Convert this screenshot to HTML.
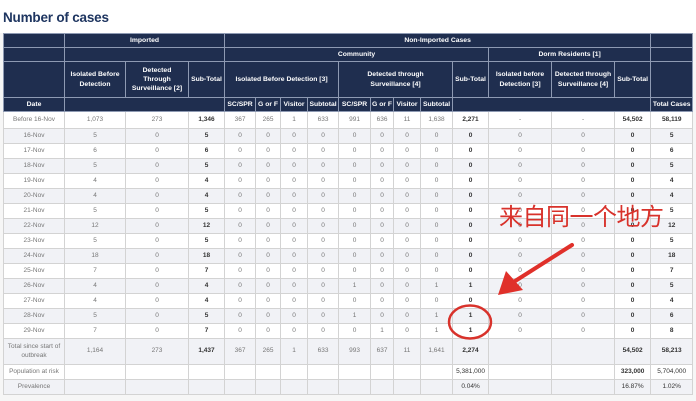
<!DOCTYPE html>
<html><head><meta charset="utf-8"><style>
*{margin:0;padding:0;box-sizing:border-box}
body{width:696px;height:401px;background:#f6f6f6;font-family:"Liberation Sans",Arial,sans-serif;position:relative;overflow:hidden}
.bgtop{position:absolute;left:0;top:0;width:696px;height:33px;background:#fff}
h1{position:absolute;left:3px;top:10px;font-size:13.5px;font-weight:bold;color:#1e3560;letter-spacing:-0.2px}
table{position:absolute;left:3px;top:33px;border-collapse:collapse;table-layout:fixed;width:689px}
td,th{font-size:6.5px;text-align:center;vertical-align:middle;overflow:hidden;line-height:1.35}
th{background:#1f2e4f;color:#fff;font-weight:bold;border:1px solid #8e9ab3;font-size:6.8px;padding:0 3px}
td{border:1px solid #d3d3d3;color:#777;background:#fff}
tr.g td{background:#f1f2f6}
td.b{font-weight:bold;color:#333}
.ann{position:absolute;left:499px;top:203px;font-family:"Noto Sans CJK SC","WenQuanYi Zen Hei",sans-serif;font-size:24px;color:#d8322b;letter-spacing:-0.5px;line-height:1}
svg{position:absolute;left:0;top:0}
</style></head><body>
<div class="bgtop"></div>
<h1>Number of cases</h1>
<table>
<colgroup><col style="width:61px"><col style="width:61px"><col style="width:63px"><col style="width:36px"><col style="width:31px"><col style="width:25px"><col style="width:27px"><col style="width:31px"><col style="width:32px"><col style="width:23px"><col style="width:27px"><col style="width:32px"><col style="width:36px"><col style="width:63px"><col style="width:63px"><col style="width:36px"><col style="width:42px"></colgroup>
<tr style="height:14px"><th></th><th colspan="3">Imported</th><th colspan="12">Non-Imported Cases</th><th></th></tr>
<tr style="height:14px"><th></th><th colspan="3"></th><th colspan="9">Community</th><th colspan="3">Dorm Residents [1]</th><th></th></tr>
<tr style="height:36px"><th></th><th>Isolated Before Detection</th><th style="padding:0 4px">Detected Through Surveillance [2]</th><th style="padding:0">Sub-Total</th><th colspan="4">Isolated Before Detection [3]</th><th colspan="4" style="padding:0 8px">Detected through Surveillance [4]</th><th style="padding:0">Sub-Total</th><th style="padding:0">Isolated before Detection [3]</th><th style="padding:0">Detected through Surveillance [4]</th><th style="padding:0">Sub-Total</th><th></th></tr>
<tr style="height:14px"><th>Date</th><th colspan="3"></th><th style="padding:0">SC/SPR</th><th style="padding:0">G or F</th><th style="padding:0">Visitor</th><th style="padding:0">Subtotal</th><th style="padding:0">SC/SPR</th><th style="padding:0">G or F</th><th style="padding:0">Visitor</th><th style="padding:0">Subtotal</th><th colspan="4"></th><th style="padding:0">Total Cases</th></tr>
<tr style="height:17px"><td>Before 16-Nov</td><td>1,073</td><td>273</td><td class="b">1,346</td><td>367</td><td>265</td><td>1</td><td>633</td><td>991</td><td>636</td><td>11</td><td>1,638</td><td class="b">2,271</td><td>-</td><td>-</td><td class="b">54,502</td><td class="b">58,119</td></tr>
<tr class="g" style="height:15px"><td>16-Nov</td><td>5</td><td>0</td><td class="b">5</td><td>0</td><td>0</td><td>0</td><td>0</td><td>0</td><td>0</td><td>0</td><td>0</td><td class="b">0</td><td>0</td><td>0</td><td class="b">0</td><td class="b">5</td></tr>
<tr style="height:15px"><td>17-Nov</td><td>6</td><td>0</td><td class="b">6</td><td>0</td><td>0</td><td>0</td><td>0</td><td>0</td><td>0</td><td>0</td><td>0</td><td class="b">0</td><td>0</td><td>0</td><td class="b">0</td><td class="b">6</td></tr>
<tr class="g" style="height:15px"><td>18-Nov</td><td>5</td><td>0</td><td class="b">5</td><td>0</td><td>0</td><td>0</td><td>0</td><td>0</td><td>0</td><td>0</td><td>0</td><td class="b">0</td><td>0</td><td>0</td><td class="b">0</td><td class="b">5</td></tr>
<tr style="height:15px"><td>19-Nov</td><td>4</td><td>0</td><td class="b">4</td><td>0</td><td>0</td><td>0</td><td>0</td><td>0</td><td>0</td><td>0</td><td>0</td><td class="b">0</td><td>0</td><td>0</td><td class="b">0</td><td class="b">4</td></tr>
<tr class="g" style="height:15px"><td>20-Nov</td><td>4</td><td>0</td><td class="b">4</td><td>0</td><td>0</td><td>0</td><td>0</td><td>0</td><td>0</td><td>0</td><td>0</td><td class="b">0</td><td>0</td><td>0</td><td class="b">0</td><td class="b">4</td></tr>
<tr style="height:15px"><td>21-Nov</td><td>5</td><td>0</td><td class="b">5</td><td>0</td><td>0</td><td>0</td><td>0</td><td>0</td><td>0</td><td>0</td><td>0</td><td class="b">0</td><td>0</td><td>0</td><td class="b">0</td><td class="b">5</td></tr>
<tr class="g" style="height:15px"><td>22-Nov</td><td>12</td><td>0</td><td class="b">12</td><td>0</td><td>0</td><td>0</td><td>0</td><td>0</td><td>0</td><td>0</td><td>0</td><td class="b">0</td><td>0</td><td>0</td><td class="b">0</td><td class="b">12</td></tr>
<tr style="height:15px"><td>23-Nov</td><td>5</td><td>0</td><td class="b">5</td><td>0</td><td>0</td><td>0</td><td>0</td><td>0</td><td>0</td><td>0</td><td>0</td><td class="b">0</td><td>0</td><td>0</td><td class="b">0</td><td class="b">5</td></tr>
<tr class="g" style="height:15px"><td>24-Nov</td><td>18</td><td>0</td><td class="b">18</td><td>0</td><td>0</td><td>0</td><td>0</td><td>0</td><td>0</td><td>0</td><td>0</td><td class="b">0</td><td>0</td><td>0</td><td class="b">0</td><td class="b">18</td></tr>
<tr style="height:15px"><td>25-Nov</td><td>7</td><td>0</td><td class="b">7</td><td>0</td><td>0</td><td>0</td><td>0</td><td>0</td><td>0</td><td>0</td><td>0</td><td class="b">0</td><td>0</td><td>0</td><td class="b">0</td><td class="b">7</td></tr>
<tr class="g" style="height:15px"><td>26-Nov</td><td>4</td><td>0</td><td class="b">4</td><td>0</td><td>0</td><td>0</td><td>0</td><td>1</td><td>0</td><td>0</td><td>1</td><td class="b">1</td><td>0</td><td>0</td><td class="b">0</td><td class="b">5</td></tr>
<tr style="height:15px"><td>27-Nov</td><td>4</td><td>0</td><td class="b">4</td><td>0</td><td>0</td><td>0</td><td>0</td><td>0</td><td>0</td><td>0</td><td>0</td><td class="b">0</td><td>0</td><td>0</td><td class="b">0</td><td class="b">4</td></tr>
<tr class="g" style="height:15px"><td>28-Nov</td><td>5</td><td>0</td><td class="b">5</td><td>0</td><td>0</td><td>0</td><td>0</td><td>1</td><td>0</td><td>0</td><td>1</td><td class="b">1</td><td>0</td><td>0</td><td class="b">0</td><td class="b">6</td></tr>
<tr style="height:15px"><td>29-Nov</td><td>7</td><td>0</td><td class="b">7</td><td>0</td><td>0</td><td>0</td><td>0</td><td>0</td><td>1</td><td>0</td><td>1</td><td class="b">1</td><td>0</td><td>0</td><td class="b">0</td><td class="b">8</td></tr>
<tr class="g" style="height:26px"><td>Total since start of outbreak</td><td>1,164</td><td>273</td><td class="b">1,437</td><td>367</td><td>265</td><td>1</td><td>633</td><td>993</td><td>637</td><td>11</td><td>1,641</td><td class="b">2,274</td><td></td><td></td><td class="b">54,502</td><td class="b">58,213</td></tr>
<tr style="height:15px"><td>Population at risk</td><td></td><td></td><td></td><td></td><td></td><td></td><td></td><td></td><td></td><td></td><td></td><td style="color:#333">5,381,000</td><td></td><td></td><td class="b">323,000</td><td style="color:#333">5,704,000</td></tr>
<tr class="g" style="height:15px"><td>Prevalence</td><td></td><td></td><td></td><td></td><td></td><td></td><td></td><td></td><td></td><td></td><td></td><td style="color:#333">0.04%</td><td></td><td></td><td style="color:#333">16.87%</td><td style="color:#333">1.02%</td></tr>
</table>
<div class="ann">来自同一个地方</div>
<svg width="696" height="401">
<line x1="572" y1="245" x2="512" y2="283" stroke="#e0302a" stroke-width="4" stroke-linecap="round"/>
<polygon points="498,295 506,271 523,290" fill="#e0302a"/>
<ellipse cx="470" cy="322" rx="21" ry="16.5" fill="none" stroke="#d8322b" stroke-width="2.5"/>
</svg>
</body></html>
